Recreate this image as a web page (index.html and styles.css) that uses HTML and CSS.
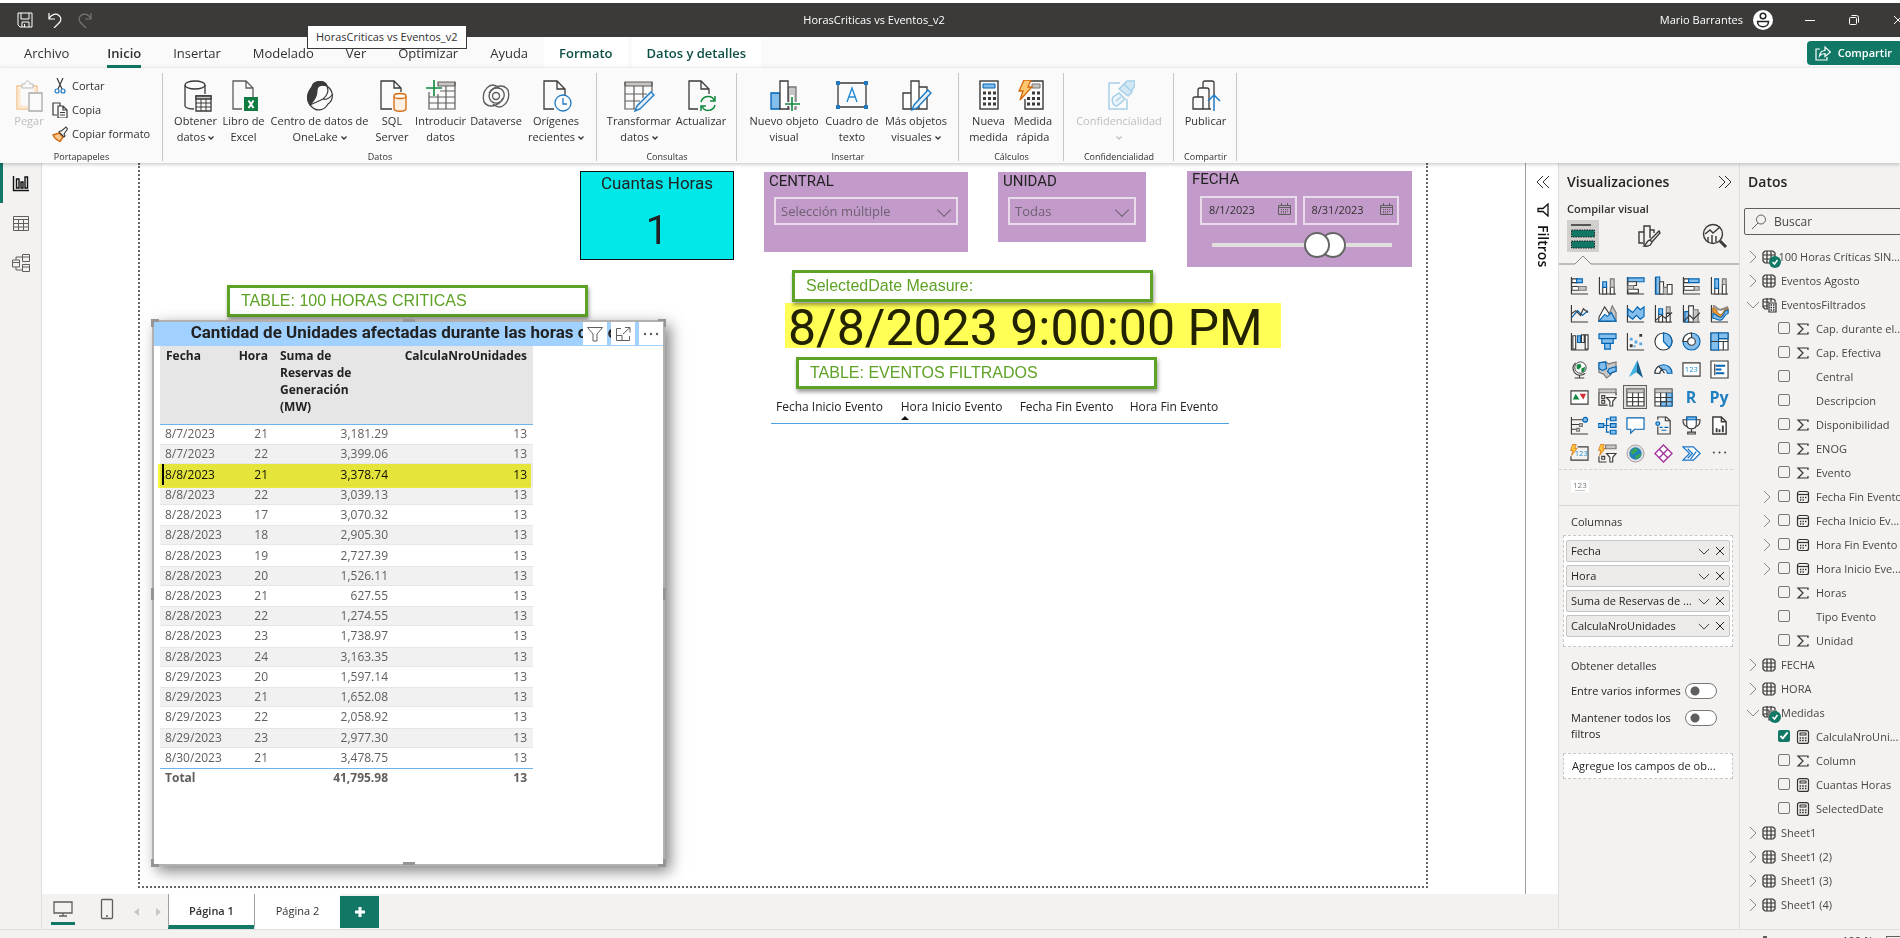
FILE: index.html
```html
<!DOCTYPE html>
<html lang="es">
<head>
<meta charset="utf-8">
<title>HorasCriticas vs Eventos_v2</title>
<link rel="stylesheet" href="styles.css">
</head>
<body>
<svg class="sprite" aria-hidden="true">
  <symbol id="i-right" viewBox="0 0 8 14"><path d="M1 1l6 6-6 6" fill="none" stroke="#8a8886"/></symbol>
  <symbol id="i-down" viewBox="0 0 14 8"><path d="M1 1l6 6 6-6" fill="none" stroke="currentColor"/></symbol>
  <symbol id="i-caret" viewBox="0 0 6 4"><path d="M.5 .5L3 3 5.500 .5" fill="none" stroke="currentColor" stroke-width="1.300"/></symbol>
  <symbol id="i-x" viewBox="0 0 10 10"><path d="M1 1l8 8M9 1l-8 8" fill="none" stroke="currentColor"/></symbol>
  <symbol id="i-table" viewBox="0 0 14 14"><path d="M3 1h8l2 2v8l-2 2H3l-2-2V3zM1 5h12M1 9h12M5 1v12M9 1v12" fill="none" stroke="#323130" stroke-width="1.200"/></symbol>
  <symbol id="i-tablecalc" viewBox="0 0 16 16"><path d="M6 12H3l-2-2V3l1-1h9l2 1v2M1 5h6M1 9h5M5 1v11M9 1v4" fill="none" stroke="#323130" stroke-width="1.200"/><path d="M7 6h7v9H7z" fill="#f3f2f1" stroke="#323130" stroke-width="1.200"/><path d="M8.500 8h4M8.500 10.500h4M8.500 13h4" stroke="#323130" stroke-width="1.500" stroke-dasharray="1.500 1"/></symbol>
  <symbol id="i-badge" viewBox="0 0 12 12"><circle cx="6" cy="6" r="6" fill="#117865"/><path d="M3.500 6l2 2 3-4" fill="none" stroke="#fff" stroke-width="1.500"/></symbol>
  <symbol id="i-sum" viewBox="0 0 14 14"><path d="M12 4V2H2l5 5-5 5h10v-2" fill="none" stroke="#323130" stroke-width="1.200"/></symbol>
  <symbol id="i-cal" viewBox="0 0 14 14"><rect x="1.500" y="1.500" width="11" height="11" rx="2" fill="none" stroke="#323130" stroke-width="1.200"/><path d="M1.500 4.500h11" stroke="#323130" stroke-width="1.200"/><path d="M4 7.500h7M4 10h5" stroke="#323130" stroke-width="1.300" stroke-dasharray="1.300 1.200"/></symbol>
  <symbol id="i-calc" viewBox="0 0 14 14"><rect x="1.500" y=".6" width="11" height="12.800" rx="2" fill="none" stroke="#323130" stroke-width="1.200"/><rect x="4" y="3" width="6" height="2" fill="none" stroke="#323130"/><path d="M3.500 8h7M3.500 10.500h7" stroke="#323130" stroke-width="1.600" stroke-dasharray="1.600 1.100"/></symbol>
  <symbol id="i-calendar" viewBox="0 0 13 13"><path d="M.5 2.500h12v9H.5zM.5 4.500h12M3.500 0v2.500M9.500 0v2.500" fill="none" stroke="#605e5c"/><path d="M3 6.500h8M3 8.500h8M3 10h6" stroke="#605e5c" stroke-dasharray="1 1"/></symbol>
  <symbol id="i-bolt" viewBox="0 0 12 20"><path d="M4 .8h6L7.500 7h4L2.500 18.500l2-8H.8z" fill="#ffc83d" stroke="#d4690b" stroke-width="1.200"/></symbol>
</svg>

<div class="app">
  <header class="titlebar">
    <div class="quick">
      <button aria-label="Guardar"><svg width="16" height="16" viewBox="0 0 16 16" fill="none" stroke="#fff"><path d="M1 1h14v14H3l-2-2zM4 1v6h8V1M5 15v-5h7v5M7.500 15v-3"/></svg></button>
      <button aria-label="Deshacer"><svg width="16" height="16" viewBox="0 0 16 16" fill="none" stroke="#fff" stroke-width="1.200"><path d="M2 1v6h6M2 6.500C5 2 9 1 12 3.500s2 5.500 0 7.500l-5 5"/></svg></button>
      <button aria-label="Rehacer"><svg width="16" height="16" viewBox="0 0 16 16" fill="none" stroke="#797775" stroke-width="1.200"><path d="M14 1v6H8M14 6.500C11 2 7 1 4 3.500s-2 5.500 0 7.500l5 5"/></svg></button>
    </div>
    <h1 class="doc">HorasCriticas vs Eventos_v2</h1>
    <div class="window">
      <span>Mario Barrantes</span>
      <svg class="avatar" width="20" height="20" viewBox="0 0 20 20"><circle cx="10" cy="10" r="10" fill="#fff"/><g fill="none" stroke="#222" stroke-width="1.500"><circle cx="10" cy="6" r="2.800"/><path d="M4.500 11.500h11c0 7-11 7-11 0z"/></g></svg>
      <button class="min" aria-label="Minimizar"><svg width="10" height="10" viewBox="0 0 10 10"><path d="M0 5.500h10" stroke="#fff"/></svg></button>
      <button class="max" aria-label="Restaurar"><svg width="10" height="10" viewBox="0 0 10 10" fill="none" stroke="#fff"><rect x=".5" y="2.500" width="7" height="7" rx="1"/><path d="M2.500 .5h5q2 0 2 2v5"/></svg></button>
      <button class="close" aria-label="Cerrar"><svg width="10" height="10"><use href="#i-x"/></svg></button>
    </div>
  </header>
  <div class="tip" role="tooltip">HorasCriticas vs Eventos_v2</div>

  <nav class="tabs">
    <button class="file">Archivo</button><button class="active">Inicio</button><button>Insertar</button><button>Modelado</button><button>Ver</button><button>Optimizar</button><button>Ayuda</button><button class="ctx">Formato</button><button class="ctx">Datos y detalles</button>
    <button class="share"><svg width="16" height="16" viewBox="0 0 16 16" fill="none" stroke="#fff" stroke-width="1.200"><path d="M5 4H1v11h11v-3M4.500 11C5 7 7 5.500 10 5.500V2l5.500 5L10 11.500V8.500C7.500 8.500 6 9 4.500 11z"/></svg>Compartir<svg width="10" height="6"><use href="#i-down"/></svg></button>
  </nav>

  <section class="ribbon">
    <div class="group clip">
      <div class="row">
        <button class="rb off"><svg width="28" height="32" viewBox="0 0 28 32" fill="none"><path d="M13 29H2V6h20v6" stroke="#f3c48d" stroke-width="1.500"/><path d="M4 8v19h9M20 8v4" stroke="#fbe8cf" stroke-width="3"/><path d="M7 8V4h3c0-4 5-4 5 0h3v4z" stroke="#bbb" fill="#fafafa"/><path d="M14 13h13v18H14z" fill="#fafafa" stroke="#aaa" stroke-width="1.300"/></svg>Pegar</button>
        <div class="mini">
          <button><svg width="16" height="16" viewBox="0 0 16 16" fill="none" stroke="#3b3a39" stroke-width="1.200"><path d="M5 0l5 11M11 0L6 11"/><g stroke="#1f7ac2"><circle cx="5" cy="13" r="2"/><circle cx="11" cy="13" r="2"/></g></svg>Cortar</button>
          <button><svg width="16" height="16" viewBox="0 0 16 16" fill="none" stroke="#3b3a39" stroke-width="1.200"><path d="M5 13H1V1h7v3"/><path d="M6 4h5l4 4v8H6zM11 4v4h4M8 10.500h5M8 13h5"/></svg>Copia</button>
          <button><svg width="16" height="16" viewBox="0 0 16 16" fill="none"><path d="M1 9l6-2 4 4-3 4.500C5 14 2 12 1 9z" fill="#f9c68c" stroke="#d4690b" stroke-width="1.400"/><path d="M7 6l5 5 1-1-1-2 3.500-5L14 1 9.500 5 8 5z" fill="#fff" stroke="#3b3a39" stroke-width="1.100"/></svg>Copiar formato</button>
        </div>
      </div>
      <div class="cap">Portapapeles</div>
    </div>

    <div class="group datos">
      <div class="row">
        <button class="rb"><svg width="32" height="32" viewBox="0 0 32 32" fill="none" stroke="#3b3a39" stroke-width="1.300"><ellipse cx="15" cy="5" rx="10" ry="4"/><path d="M5 5v21c1 2 4 3 9 3M25 5v9"/><path d="M16 16h15v15H16z" fill="#fafafa"/><path d="M16 16h15v3H16z" fill="#c8c6c4"/><path d="M16 23h15M16 27h15M21 19v12M26 19v12" stroke-width="1"/></svg><span>Obtener<br>datos <svg width="6" height="4"><use href="#i-caret"/></svg></span></button>
        <button class="rb"><svg width="32" height="32" viewBox="0 0 32 32" fill="none" stroke="#605e5c" stroke-width="1.300"><path d="M14 29H5V1h13l7 7v9M18 1v7h7"/><path d="M16 17h14v14H16z" fill="#107c41" stroke="none"/><path d="M20.500 20.500l5 7.500M25.500 20.500l-5 7.500" stroke="#fff" stroke-width="2"/></svg><span>Libro de<br>Excel</span></button>
        <button class="rb"><svg width="32" height="32" viewBox="0 0 32 32" fill="none" stroke="#3b3a39" stroke-width="1.200"><path d="M8 7C10 0 21 0 23 6c7 5 7 14 1 18-4 7-12 8-17 2-5-6-4-13 1-19z"/><path d="M8 7C10 0 21 0 23 6c-6-2-10 0-10 4 0 6-2 9-7 15-4-7-2-13 2-18z" fill="#3b3a39"/><path d="M23 6c2 5 1 9-4 13-4 2-9 4-13 6M29 14c-4 5-7 6-10 5"/></svg><span>Centro de datos de<br>OneLake <svg width="6" height="4"><use href="#i-caret"/></svg></span></button>
        <button class="rb"><svg width="32" height="32" viewBox="0 0 32 32" fill="none" stroke="#3b3a39" stroke-width="1.300"><path d="M16 29H5V1h13l7 7v4M18 1v7h7"/><path d="M18 16v13c1 3 11 3 12 0V16" fill="#fdf0e2" stroke="#d4690b"/><ellipse cx="24" cy="16" rx="6" ry="2.500" fill="#fff" stroke="#d4690b"/></svg><span>SQL<br>Server</span></button>
        <button class="rb"><svg width="32" height="32" viewBox="0 0 32 32" fill="none" stroke="#605e5c" stroke-width="1.200"><path d="M13 2h17v4H13z" fill="#c8c6c4"/><path d="M4 12v17h26V2M4 17h26M4 23h26M13 14v15M21 6v23M15 11h15"/><path d="M9 0v16M1 8h16" stroke="#10893e" stroke-width="1.600"/></svg><span>Introducir<br>datos</span></button>
        <button class="rb"><svg width="32" height="32" viewBox="0 0 32 32" fill="none" stroke="#605e5c" stroke-width="1.400"><path d="M19 8C10 0 1 11 4 22c5 7 14 4 19-3 3-5 0-11-6-11-7 0-10 8-6 13 4 4 10 2 12-3"/><path d="M13 24c9 8 18-3 15-14-5-7-14-4-19 3"/><circle cx="16" cy="16" r="3.500"/></svg><span>Dataverse</span></button>
        <button class="rb"><svg width="32" height="32" viewBox="0 0 32 32" fill="none" stroke="#3b3a39" stroke-width="1.300"><path d="M14 29H4V1h13l8 8v6M17 1v8h8"/><circle cx="23" cy="23" r="8" fill="#fff" stroke="#1f7ac2"/><path d="M23 18v6h4" stroke="#1f7ac2"/></svg><span>Orígenes<br>recientes <svg width="6" height="4"><use href="#i-caret"/></svg></span></button>
      </div>
      <div class="cap">Datos</div>
    </div>

    <div class="group consultas">
      <div class="row">
        <button class="rb"><svg width="32" height="32" viewBox="0 0 32 32" fill="none" stroke="#605e5c" stroke-width="1.200"><path d="M2 2h27v4H2z" fill="#c8c6c4"/><path d="M29 2v10M13 29H2V2M2 14h22M2 21h15M11 6v23M20 6v12"/><path d="M28 12l3 3-14 14-5 2 2-5z" fill="#e4f1fb" stroke="#1f7ac2" stroke-width="1.400"/></svg><span>Transformar<br>datos <svg width="6" height="4"><use href="#i-caret"/></svg></span></button>
        <button class="rb"><svg width="32" height="32" viewBox="0 0 32 32" fill="none" stroke="#3b3a39" stroke-width="1.300"><path d="M13 29H4V1h12l8 8v5M16 1v8h8"/><path d="M16 22c2-7 11-7 13-2M30 16v5h-5M30 25c-2 7-11 7-13 1M16 31v-5h5" stroke="#10893e" stroke-width="1.500"/></svg><span>Actualizar</span></button>
      </div>
      <div class="cap">Consultas</div>
    </div>

    <div class="group insertar">
      <div class="row">
        <button class="rb"><svg width="32" height="32" viewBox="0 0 32 32" fill="none" stroke-width="1.300"><path d="M20 7h8v22h-8z" fill="#c8c6c4" stroke="#797775"/><path d="M3 13h9v16H3z" fill="#83beec" stroke="#0063b1"/><path d="M12 1h8v28h-8z" fill="#fff" stroke="#3b3a39"/><path d="M24 15v17M16 24h16" stroke="#fafafa" stroke-width="4"/><path d="M24 17v14M17 24h15" stroke="#10893e" stroke-width="1.600"/></svg><span>Nuevo objeto<br>visual</span></button>
        <button class="rb"><svg width="32" height="32" viewBox="0 0 32 32" fill="none"><path d="M2 3h28v24H2z" stroke="#3b3a39" stroke-width="1.300"/><path d="M0 1h4v4H0zM28 1h4v4h-4zM0 25h4v4H0zM28 25h4v4h-4z" fill="#1f7ac2"/><path d="M11 22l5-14 5 14M13 17h6" stroke="#1f8ad2" stroke-width="1.400"/></svg><span>Cuadro de<br>texto</span></button>
        <button class="rb"><svg width="32" height="32" viewBox="0 0 32 32" fill="none" stroke="#3b3a39" stroke-width="1.300"><path d="M3 13h8v16H3zM11 1h8v28h-8zM19 7h8v22h-8z" fill="#fff"/><path d="M28 10l3 3-14 15-5 2 2-5z" fill="#e4f1fb" stroke="#1f7ac2" stroke-width="1.400"/></svg><span>Más objetos<br>visuales <svg width="6" height="4"><use href="#i-caret"/></svg></span></button>
      </div>
      <div class="cap">Insertar</div>
    </div>

    <div class="group calculos">
      <div class="row">
        <button class="rb"><svg width="32" height="32" viewBox="0 0 32 32" fill="none" stroke="#3b3a39"><rect x="7" y="1" width="18" height="28" stroke-width="1.400"/><path d="M10 4h12v4H10z" fill="#83beec" stroke="#0063b1"/><path d="M10 13h13M10 18.500h13M10 24h13" stroke-width="3" stroke-dasharray="3 2"/></svg><span>Nueva<br>medida</span></button>
        <button class="rb"><svg width="32" height="32" viewBox="0 0 32 32" fill="none" stroke="#3b3a39"><path d="M12 1h14v28H8V19" stroke-width="1.400"/><path d="M15 4h8v4h-8z" fill="#c8c6c4" stroke="#797775"/><path d="M15 13h9M10 18.500h14M10 24h14" stroke-width="3" stroke-dasharray="3 2"/><path d="M7 0h7l-3 7h4L3 20l3-9H2z" fill="#ffc870" stroke="#d4690b" stroke-width="1.300"/></svg><span>Medida<br>rápida</span></button>
      </div>
      <div class="cap">Cálculos</div>
    </div>

    <div class="group confid">
      <div class="row">
        <button class="rb off"><svg width="32" height="32" viewBox="0 0 32 32" fill="none" stroke="#a6cfe8" stroke-width="1.500"><path d="M17 3H6v26h18V19"/><path d="M10 17l6-4 6 6-8 7c-4 0-6-5-4-9zM13 21l5-4" fill="#e8f3fa"/><path d="M16 9l5-5 8 8-4 4zM21 4l3-3 8 0-1 6-3 5" fill="#d3e8f5"/></svg><span>Confidencialidad<br><svg width="6" height="4"><use href="#i-caret"/></svg></span></button>
      </div>
      <div class="cap">Confidencialidad</div>
    </div>

    <div class="group compartir">
      <div class="row">
        <button class="rb"><svg width="32" height="32" viewBox="0 0 32 32" fill="none" stroke="#3b3a39" stroke-width="1.300"><path d="M3 29V19q0-2 2-2h8v12zM8 17V10q0-2 2-2h7q2 0 2 2v19h-6M13 8V3q0-2 2-2h7q2 0 2 2v12M19 29h2"/><path d="M24 31V15M18 21l6-6 6 6" stroke="#1f7ac2" stroke-width="1.500"/></svg><span>Publicar</span></button>
      </div>
      <div class="cap">Compartir</div>
    </div>
  </section>

  <main class="work">
    <nav class="rail">
      <button class="on" aria-label="Informe"><svg width="18" height="18" viewBox="0 0 18 18" fill="none" stroke="#111" stroke-width="1.400"><path d="M1.500 2v14.500H17M4.500 5h2.500v9H4.500zM9 8h2v6H9zM13 3h2.500v11H13z"/></svg></button>
      <button aria-label="Datos"><svg width="18" height="18" viewBox="0 0 18 18" fill="none" stroke="#605e5c"><path d="M1.500 2.500h15v14h-15zM1.500 5.500h15M1.500 9.500h15M1.500 13h15M6.500 5.500v11M11.500 5.500v11"/></svg></button>
      <button aria-label="Modelo"><svg width="18" height="18" viewBox="0 0 18 18" fill="none" stroke="#605e5c"><path d="M10.500 .5h7v7h-7zM10.500 3h7M10.500 10.500h7v7h-7zM10.500 13h7M.5 6h7v7h-7zM.5 8.500h7M4 6V3h6.500M4 13v3h6.500"/></svg></button>
    </nav>

    <div class="center">
      <div class="stage">
        <div class="canvas">
          <div class="page"></div>

          <article class="card"><h2>Cuantas Horas</h2><p>1</p></article>

          <section class="slicer central"><label for="central">CENTRAL</label><select id="central"><option>Selección múltiple</option></select></section>
          <section class="slicer unidad"><label for="unidad">UNIDAD</label><select id="unidad"><option>Todas</option></select></section>
          <section class="slicer fecha"><span class="name">FECHA</span>
            <div class="dates">
              <label><input type="text" value="8/1/2023" aria-label="Fecha inicial"><svg width="13" height="13"><use href="#i-calendar"/></svg></label>
              <label><input type="text" value="8/31/2023" aria-label="Fecha final"><svg width="13" height="13"><use href="#i-calendar"/></svg></label>
            </div>
            <div class="range"><input type="range" value="70" aria-label="Hasta"><input type="range" value="60" aria-label="Desde"></div>
          </section>

          <div class="measure">8/8/2023 9:00:00 PM</div>
          <div class="note n1">TABLE: 100 HORAS CRITICAS</div>
          <div class="note n2">SelectedDate Measure:</div>
          <div class="note n3">TABLE: EVENTOS FILTRADOS</div>

          <table class="events"><thead><tr><th>Fecha Inicio Evento</th><th class="asc">Hora Inicio Evento</th><th>Fecha Fin Evento</th><th>Hora Fin Evento</th></tr></thead></table>

          <article class="visual">
            <h2>Cantidad de Unidades afectadas durante las horas críticas</h2>
            <div class="tools">
              <button aria-label="Filtros"><svg width="16" height="16" viewBox="0 0 16 16" fill="none" stroke="#605e5c"><path d="M.5 1.500h15L10 8v7H6V8z"/></svg></button>
              <button aria-label="Modo de enfoque"><svg width="16" height="16" viewBox="0 0 16 16" fill="none" stroke="#605e5c"><path d="M6 2.500H1.500v12h13V10M10 1.500h5v5M15 1.500L8 8M1.500 9.500H7v5"/></svg></button>
              <button aria-label="Más opciones"><svg width="16" height="16" viewBox="0 0 16 16" fill="#605e5c"><circle cx="2" cy="8" r="1.200"/><circle cx="8" cy="8" r="1.200"/><circle cx="14" cy="8" r="1.200"/></svg></button>
            </div>
            <table class="grid">
              <colgroup><col class="c1"><col class="c2"><col class="c3"><col class="c4"></colgroup>
              <thead><tr><th>Fecha</th><th>Hora</th><th>Suma de Reservas de Generación (MW)</th><th>CalculaNroUnidades</th></tr></thead>
              <tbody>
                <tr><td>8/7/2023</td><td>21</td><td>3,181.29</td><td>13</td></tr>
                <tr><td>8/7/2023</td><td>22</td><td>3,399.06</td><td>13</td></tr>
                <tr class="sel"><td>8/8/2023</td><td>21</td><td>3,378.74</td><td>13</td></tr>
                <tr><td>8/8/2023</td><td>22</td><td>3,039.13</td><td>13</td></tr>
                <tr><td>8/28/2023</td><td>17</td><td>3,070.32</td><td>13</td></tr>
                <tr><td>8/28/2023</td><td>18</td><td>2,905.30</td><td>13</td></tr>
                <tr><td>8/28/2023</td><td>19</td><td>2,727.39</td><td>13</td></tr>
                <tr><td>8/28/2023</td><td>20</td><td>1,526.11</td><td>13</td></tr>
                <tr><td>8/28/2023</td><td>21</td><td>627.55</td><td>13</td></tr>
                <tr><td>8/28/2023</td><td>22</td><td>1,274.55</td><td>13</td></tr>
                <tr><td>8/28/2023</td><td>23</td><td>1,738.97</td><td>13</td></tr>
                <tr><td>8/28/2023</td><td>24</td><td>3,163.35</td><td>13</td></tr>
                <tr><td>8/29/2023</td><td>20</td><td>1,597.14</td><td>13</td></tr>
                <tr><td>8/29/2023</td><td>21</td><td>1,652.08</td><td>13</td></tr>
                <tr><td>8/29/2023</td><td>22</td><td>2,058.92</td><td>13</td></tr>
                <tr><td>8/29/2023</td><td>23</td><td>2,977.30</td><td>13</td></tr>
                <tr><td>8/30/2023</td><td>21</td><td>3,478.75</td><td>13</td></tr>
              </tbody>
              <tfoot><tr><td>Total</td><td></td><td>41,795.98</td><td>13</td></tr></tfoot>
            </table>
            <div class="marker"></div>
            <i class="h tl"></i><i class="h tr"></i><i class="h bl"></i><i class="h br"></i><i class="h tm"></i><i class="h bm"></i><i class="h lm"></i><i class="h rm"></i>
          </article>
        </div>

        <aside class="filtros">
          <svg width="14" height="14" viewBox="0 0 14 14" fill="none" stroke="#323130"><path d="M7 1L1 7l6 6M13 1L7 7l6 6"/></svg>
          <svg width="12" height="14" viewBox="0 0 12 14" fill="none" stroke="#111" stroke-width="1.300"><path d="M11 1v12L6 8.500H1v-3h5z"/></svg>
          <h2>Filtros</h2>
        </aside>
      </div>

      <footer class="pagebar">
        <button class="dev on" aria-label="Escritorio"><svg width="20" height="20" viewBox="0 0 20 20" fill="none" stroke="#605e5c" stroke-width="1.300"><path d="M1 3h18v11H1zM10 14v3M6 17h8"/></svg></button>
        <button class="dev phone" aria-label="Móvil"><svg width="14" height="22" viewBox="0 0 14 22" fill="none" stroke="#605e5c" stroke-width="1.300"><rect x="1.500" y="1.500" width="11" height="19" rx="1"/><path d="M6 18h2"/></svg></button>
        <button class="arr" aria-label="Anterior"><svg width="5" height="8"><path d="M5 0v8L0 4z" fill="#c8c6c4"/></svg></button>
        <button class="arr" aria-label="Siguiente"><svg width="5" height="8"><path d="M0 0v8l5-4z" fill="#c8c6c4"/></svg></button>
        <button class="pg on">Página 1</button><button class="pg">Página 2</button>
        <button class="add" aria-label="Nueva página"><svg width="12" height="12"><path d="M6 1v10M1 6h10" stroke="#fff" stroke-width="3"/></svg></button>
      </footer>
    </div>

    <aside class="vis">
      <header><h2>Visualizaciones</h2><svg width="14" height="14" viewBox="0 0 14 14" fill="none" stroke="#323130"><path d="M1 1l6 6-6 6M7 1l6 6-6 6"/></svg></header>
      <h3>Compilar visual</h3>
      <div class="modes">
        <button class="on" aria-label="Compilar visual"><svg width="26" height="26" viewBox="0 0 26 26"><path d="M1 2h20" stroke="#222" stroke-width="1.400"/><g fill="#117865" stroke="#222" stroke-dasharray="1.500 1"><path d="M1.500 7h23v7h-23zM1.500 18h23v7h-23z"/></g></svg></button>
        <button aria-label="Dar formato"><svg width="24" height="26" viewBox="0 0 24 26" fill="none" stroke="#3b3a39" stroke-width="1.400"><path d="M6 20H2V9h5v13M7 9V3h6v12M13 7h4v3"/><path d="M22 8L13 17l2 2 8-9zM13 17c-3 0-3 4-6 6 4 1 7-1 8-4" fill="#f3f2f1"/></svg></button>
        <button aria-label="Análisis"><svg width="26" height="26" viewBox="0 0 26 26" fill="none" stroke="#3b3a39" stroke-width="1.400"><circle cx="11" cy="11" r="9.500"/><path d="M3 11l5-4 3 3 7-6M6 19v-5M10 20v-8M14 19v-6"/><path d="M18 18l6 6" stroke-width="3"/></svg></button>
      </div>
      <svg class="notch" width="181" height="10" viewBox="0 0 181 10" fill="none" stroke="#8a8886"><path d="M0 9h16l8-8 8 8h149"/></svg>

      <div class="gallery">
        <svg viewBox="0 0 20 20"><path d="M1.500 1v18H19" class="k"/><path d="M2 3h6v4H2z" class="w"/><path d="M7 3h6v4H7z" class="b"/><path d="M2 11h7v4H2z" class="w"/><path d="M9 11h8v4H9z" class="g"/></svg>
        <svg viewBox="0 0 20 20"><path d="M1.500 1v18H19" class="k"/><path d="M5 12h4v7H5zM13 12h4v7h-4z" class="w"/><path d="M5 6h4v6H5z" class="b"/><path d="M13 3h4v9h-4z" class="g"/></svg>
        <svg viewBox="0 0 20 20"><path d="M1.500 1v18H19" class="k"/><path d="M2 2h17v4H2z" class="b"/><path d="M2 6h9v4H2zM2 14h11v4H2z" class="w"/><path d="M2 10h6v4H2z" class="g"/></svg>
        <svg viewBox="0 0 20 20"><path d="M1.500 1v18H19" class="k"/><path d="M2 1h4v18H2z" class="b"/><path d="M6 6h4v13H6zM14 9h5v10h-5z" class="w"/><path d="M10 12h4v7h-4z" class="g"/></svg>
        <svg viewBox="0 0 20 20"><path d="M1.500 1v18H19" class="k"/><path d="M2 3h5v4H2zM2 11h11v4H2z" class="w"/><path d="M7 3h11v4H7z" class="b"/><path d="M13 11h5v4h-5z" class="g"/></svg>
        <svg viewBox="0 0 20 20"><path d="M1.500 1v18H19" class="k"/><path d="M5 13h4v6H5zM13 9h4v10h-4z" class="w"/><path d="M5 3h4v10H5z" class="b"/><path d="M13 3h4v6h-4z" class="g"/></svg>

        <svg viewBox="0 0 20 20"><path d="M1.500 1v18H19" class="k"/><path d="M2 14L8 7l5 5 6-5" class="bl"/><path d="M2 10l4-3 5 5 3-7 5 4" class="k"/></svg>
        <svg viewBox="0 0 20 20"><path d="M9 18l6-16 4 7v9z" class="g"/><path d="M1 14L7 3l6 9v6H1z" class="w"/><path d="M1 18l6-7 3 2 4-4 5 9z" class="b"/></svg>
        <svg viewBox="0 0 20 20"><path d="M1.500 1v18H19" class="k"/><path d="M2 5l5 4 5-6 3 3 4-3v10l-4 3-4-4-4 4-5-4z" class="b"/></svg>
        <svg viewBox="0 0 20 20"><path d="M1.500 1v18H19" class="k"/><path d="M5 10h4v9H5zM13 10h4v9h-4z" class="w"/><path d="M5 5h4v6H5z" class="b"/><path d="M13 3h4v6h-4z" class="g"/><path d="M2 17l6-5 4 3 7-6" class="k"/></svg>
        <svg viewBox="0 0 20 20"><path d="M1.500 1v18H19" class="k"/><path d="M3 8h4v11H3z" class="b"/><path d="M7 2h5v17H7z" class="w"/><path d="M12 6h5v13h-5z" class="g"/><path d="M2 18l6-6 4 4 7-7" class="k"/></svg>
        <svg viewBox="0 0 20 20"><path d="M1.500 1v18H19" class="k"/><path d="M3 4c5 0 4 7 8 7s3-7 8-7v5c-4 0-4 7-8 7S7 9 3 9z" fill="#ef9d37" stroke="#a05a10"/><path d="M3 10c4 0 4 4 8 4s3-8 8-8v4c-4 0-4 7-8 7s-4-2-8-2z" class="b"/><path d="M3 2c4 0 4 4 8 4s4-2 8-3" fill="none" stroke="#8a8886" stroke-width="2"/></svg>

        <svg viewBox="0 0 20 20"><path d="M1.500 1v18H19" class="k"/><path d="M3 4h3v14H3zM12 3h3v8h-3zM16 3h3v15h-3z" class="w"/><path d="M8 4h3v7H8z" class="b"/></svg>
        <svg viewBox="0 0 20 20"><path d="M1 2h18v5H1zM4 7h12v5H4zM7 12h6v6H7z" class="b"/></svg>
        <svg viewBox="0 0 20 20"><path d="M1.500 1v18H19" class="k"/><path d="M4 6h3v3H4zM9 9h3v3H9zM14 11h3v3h-3zM8 14h2v2H8z" fill="#5ba7e0"/><path d="M14 2h3v3h-3zM4 13h3v3H4z" fill="#3b3a39"/></svg>
        <svg viewBox="0 0 20 20"><circle cx="10" cy="10" r="9" class="w"/><path d="M10 1a9 9 0 0 1 6 15.500L10 10z" class="b"/></svg>
        <svg viewBox="0 0 20 20"><circle cx="10" cy="10" r="9" class="b"/><path d="M10 1a9 9 0 0 0-9 9h5a4 4 0 0 1 4-4z" class="w"/><circle cx="10" cy="10" r="4" class="w"/></svg>
        <svg viewBox="0 0 20 20"><path d="M1 1h18v18H1z" class="w"/><path d="M1 1h8v18H1z" class="b"/><path d="M1 10h18M14 10v9M9 7h10" class="k"/><path d="M9 1h10v6H9z" class="b"/></svg>

        <svg viewBox="0 0 20 20"><circle cx="11" cy="8" r="6" fill="#fff" stroke="#3b3a39"/><path d="M7 5l4-1 1 3-3 3-2-1zM12 9l4-2-1 5-3 1z" fill="#10893e"/><path d="M6 3c-5 4-3 12 4 13 3 0 5-1 6-2M10 16v3M5 19h10" class="k"/></svg>
        <svg viewBox="0 0 20 20"><path d="M1 3l7-1 3 2 8-2v10l-4 1-2 3-4 3-3-4-5-2z" class="g"/><path d="M1 3l7-1 1 7-4 2-4-2zM12 9l7-2v5l-4 1-2 2-3-3z" class="b"/></svg>
        <svg viewBox="0 0 20 20"><path d="M12 0L3 18l8-5z" fill="#41b3e6"/><path d="M12 0l6 19-7-6z" fill="#155f8d"/></svg>
        <svg viewBox="0 0 20 20"><path d="M1 14a9 9 0 0 1 18 0h-5a4 4 0 0 0-8 0z" class="b"/><path d="M1 14a9 9 0 0 1 4-7.500l3 4A4 4 0 0 0 6 14z" class="w"/><path d="M11 14L7 8" class="k"/></svg>
        <svg viewBox="0 0 20 20"><path d="M1 3h18v14H1z" class="w"/><text x="3" y="13" class="num">123</text></svg>
        <svg viewBox="0 0 20 20"><path d="M1 1h18v18H1zM5 4v12" class="w"/><path d="M6 6h10M6 10h6M6 14h9" stroke="#0063b1" stroke-width="2"/></svg>

        <svg viewBox="0 0 20 20"><path d="M1 3h18v14H1z" class="w"/><path d="M3 12l3-6 4 6z" fill="#10893e"/><path d="M10 6h7l-3 6z" fill="#d13438"/></svg>
        <svg viewBox="0 0 20 20"><path d="M1 1h18v4H1z" class="g"/><path d="M10 18H1V5M19 5v3M4 8h3v3H4zM4 13h3v3H4z" class="k"/><path d="M9 10h10l-3.500 4v5h-3v-5z" class="w"/></svg>
        <span class="pick"><svg viewBox="0 0 20 20"><path d="M1 1h18v18H1z" class="w"/><path d="M1 1h18v4H1z" class="g"/><path d="M1 10h18M1 14.500h18M7 5v14M13 5v14" class="k"/></svg></span>
        <svg viewBox="0 0 20 20"><path d="M1 1h18v18H1z" class="w"/><path d="M13 5h6v14H7v-4.500h6z" class="b"/><path d="M1 1h18v4H1z" class="g"/><path d="M1 10h18M1 14.500h18M7 5v14M13 5v14" class="k"/></svg>
        <b class="lang">R</b>
        <b class="lang">Py</b>

        <svg viewBox="0 0 20 20"><path d="M1.500 1v18H19M2 4h12M2 9h10M2 14h5" class="k"/><circle cx="16" cy="4" r="2.500" class="b"/><path d="M10 8h3v3h-3zM7 13h3v3H7z" class="g"/></svg>
        <svg viewBox="0 0 20 20"><path d="M6 10h6M12 3H9v14h3" class="bl"/><path d="M0 8h6v4H0zM13 1h6v4h-6zM13 8h6v4h-6zM13 15h6v4h-6z" class="b"/></svg>
        <svg viewBox="0 0 20 20"><path d="M1 2h18v12H9l-4 4v-4H1z" fill="#fff" stroke="#0063b1" stroke-width="1.200"/></svg>
        <svg viewBox="0 0 20 20"><path d="M4 4V1h9l4 4v14H4v-8M12 1v4h5" class="k"/><path d="M6 12h3M11 12h4M8 15h5" class="bl"/><circle cx="4" cy="8" r="2" class="b"/></svg>
        <svg viewBox="0 0 20 20"><path d="M5 4H1c0 5 2 7 5 7M15 4h4c0 5-2 7-5 7M10 13v4M6 19h8v-2H6z" class="k"/><path d="M5 1h10v8c0 6-10 6-10 0z" class="w"/><path d="M5 1h10v3H5z" class="b"/></svg>
        <svg viewBox="0 0 20 20"><path d="M3 1h9l5 5v13H3zM12 1v5h5" fill="#fff" stroke="#3b3a39" stroke-width="1.500"/><path d="M7 17v-4M10 17v-3M13.500 17v-7" stroke="#3b3a39" stroke-width="2"/></svg>

        <svg viewBox="0 0 20 20"><path d="M8 3h11v14H1v-4" class="k"/><text x="5" y="13" class="num">123</text><use href="#i-bolt" width="8" height="13" x="0" y="0"/></svg>
        <svg viewBox="0 0 20 20"><path d="M8 1h11v4H8z" class="g"/><path d="M1 13v6h8M4 13h3v3H4z" class="k"/><path d="M9 10h10l-3.500 4v5h-3v-5z" class="w"/><use href="#i-bolt" width="8" height="13" x="0" y="0"/></svg>
        <svg viewBox="0 0 20 20"><circle cx="10" cy="10" r="9" fill="#e1dfdd" stroke="#a19f9d"/><circle cx="10" cy="10" r="6.500" fill="#2080c0"/><path d="M5 8l5-4 3 2-4 4-3 1zM9 13l6-3 1 2-5 4z" fill="#3aa655"/></svg>
        <svg viewBox="0 0 20 20"><path d="M10 1l9 9-9 9-9-9zM5.500 5.500l9 9M14.500 5.500l-9 9" fill="#fff" stroke="#a0309a" stroke-width="1.400"/></svg>
        <svg viewBox="0 0 20 20"><path d="M1 3h11l7 7-7 7H1l7-7zM6 5l5 5-5 5M9 16l6-8" fill="#fff" stroke="#1a73c8" stroke-width="1.300"/></svg>
        <svg viewBox="0 0 20 20"><g fill="#3b3a39"><circle cx="4" cy="9" r="1"/><circle cx="10" cy="9" r="1"/><circle cx="16" cy="9" r="1"/></g></svg>
      </div>

      <div class="custom"><svg width="18" height="12" viewBox="0 0 18 12"><path d="M0 0h18v12H0z" fill="#fff"/><text x="2" y="8" class="num dim">123</text><path d="M4 10.500h10" stroke="#c8c6c4"/></svg></div>

      <div class="fields">
        <h4>Columnas</h4>
        <ul class="well">
          <li><span>Fecha</span><svg width="12" height="7"><use href="#i-down"/></svg><svg width="10" height="10"><use href="#i-x"/></svg></li>
          <li><span>Hora</span><svg width="12" height="7"><use href="#i-down"/></svg><svg width="10" height="10"><use href="#i-x"/></svg></li>
          <li><span>Suma de Reservas de ...</span><svg width="12" height="7"><use href="#i-down"/></svg><svg width="10" height="10"><use href="#i-x"/></svg></li>
          <li><span>CalculaNroUnidades</span><svg width="12" height="7"><use href="#i-down"/></svg><svg width="10" height="10"><use href="#i-x"/></svg></li>
        </ul>
        <h4 class="drill">Obtener detalles</h4>
        <label class="sw"><span>Entre varios informes</span><input type="checkbox"></label>
        <label class="sw"><span>Mantener todos los filtros</span><input type="checkbox"></label>
        <div class="drop">Agregue los campos de ob...</div>
      </div>
    </aside>

    <aside class="data">
      <h2>Datos</h2>
      <div class="search"><svg width="16" height="16" viewBox="0 0 16 16" fill="none" stroke="#605e5c"><circle cx="10" cy="5.500" r="4.500"/><path d="M7 9l-6 6"/></svg><input type="text" placeholder="Buscar" aria-label="Buscar"></div>
      <ul class="tree">
        <li class="t"><svg class="r"><use href="#i-right"/></svg><span class="ic"><svg><use href="#i-table"/></svg><svg class="badge"><use href="#i-badge"/></svg></span>100 Horas Críticas SIN...</li>
        <li class="t"><svg class="r"><use href="#i-right"/></svg><span class="ic"><svg><use href="#i-table"/></svg></span>Eventos Agosto</li>
        <li class="t"><svg class="d"><use href="#i-down"/></svg><span class="ic"><svg class="big"><use href="#i-tablecalc"/></svg></span>EventosFiltrados</li>
        <li class="f"><label><input type="checkbox"><svg><use href="#i-sum"/></svg>Cap. durante el...</label></li>
        <li class="f"><label><input type="checkbox"><svg><use href="#i-sum"/></svg>Cap. Efectiva</label></li>
        <li class="f"><label><input type="checkbox"><svg></svg>Central</label></li>
        <li class="f"><label><input type="checkbox"><svg></svg>Descripcion</label></li>
        <li class="f"><label><input type="checkbox"><svg><use href="#i-sum"/></svg>Disponibilidad</label></li>
        <li class="f"><label><input type="checkbox"><svg><use href="#i-sum"/></svg>ENOG</label></li>
        <li class="f"><label><input type="checkbox"><svg><use href="#i-sum"/></svg>Evento</label></li>
        <li class="f x"><svg class="r"><use href="#i-right"/></svg><label><input type="checkbox"><svg><use href="#i-cal"/></svg>Fecha Fin Evento</label></li>
        <li class="f x"><svg class="r"><use href="#i-right"/></svg><label><input type="checkbox"><svg><use href="#i-cal"/></svg>Fecha Inicio Ev...</label></li>
        <li class="f x"><svg class="r"><use href="#i-right"/></svg><label><input type="checkbox"><svg><use href="#i-cal"/></svg>Hora Fin Evento</label></li>
        <li class="f x"><svg class="r"><use href="#i-right"/></svg><label><input type="checkbox"><svg><use href="#i-cal"/></svg>Hora Inicio Eve...</label></li>
        <li class="f"><label><input type="checkbox"><svg><use href="#i-sum"/></svg>Horas</label></li>
        <li class="f"><label><input type="checkbox"><svg></svg>Tipo Evento</label></li>
        <li class="f"><label><input type="checkbox"><svg><use href="#i-sum"/></svg>Unidad</label></li>
        <li class="t"><svg class="r"><use href="#i-right"/></svg><span class="ic"><svg><use href="#i-table"/></svg></span>FECHA</li>
        <li class="t"><svg class="r"><use href="#i-right"/></svg><span class="ic"><svg><use href="#i-table"/></svg></span>HORA</li>
        <li class="t"><svg class="d"><use href="#i-down"/></svg><span class="ic"><svg class="big"><use href="#i-tablecalc"/></svg><svg class="badge"><use href="#i-badge"/></svg></span>Medidas</li>
        <li class="f"><label><input type="checkbox" checked><svg><use href="#i-calc"/></svg>CalculaNroUni...</label></li>
        <li class="f"><label><input type="checkbox"><svg><use href="#i-sum"/></svg>Column</label></li>
        <li class="f"><label><input type="checkbox"><svg><use href="#i-calc"/></svg>Cuantas Horas</label></li>
        <li class="f"><label><input type="checkbox"><svg><use href="#i-calc"/></svg>SelectedDate</label></li>
        <li class="t"><svg class="r"><use href="#i-right"/></svg><span class="ic"><svg><use href="#i-table"/></svg></span>Sheet1</li>
        <li class="t"><svg class="r"><use href="#i-right"/></svg><span class="ic"><svg><use href="#i-table"/></svg></span>Sheet1 (2)</li>
        <li class="t"><svg class="r"><use href="#i-right"/></svg><span class="ic"><svg><use href="#i-table"/></svg></span>Sheet1 (3)</li>
        <li class="t"><svg class="r"><use href="#i-right"/></svg><span class="ic"><svg><use href="#i-table"/></svg></span>Sheet1 (4)</li>
      </ul>
    </aside>
  </main>
  <footer class="status"><i class="thumb"></i><span>100 %</span><i class="fit"></i></footer>
</div>
</body>
</html>
```
FILE: styles.css
```css
* { box-sizing: border-box; }
body, h1, h2, h3, h4, p, ul { margin: 0; padding: 0; }
ul { list-style: none; }
body { font: 12px/16px "Open Sans", "Noto Sans", sans-serif; color: #323130; background: #fff; overflow: hidden; }
button { font: inherit; color: inherit; background: none; border: 0; padding: 0; white-space: nowrap; }
svg { flex: none; display: block; }
.sprite { position: absolute; width: 0; height: 0; }

.app { position: relative; height: 100vh; padding-top: 3px; display: flex; flex-direction: column; overflow: hidden; }

/* Title bar */
.titlebar { height: 34px; flex: none; background: #3b3a39; color: #fff; display: grid; grid-template-columns: 1fr auto 1fr; align-items: center; }
.quick { display: flex; gap: 14px; padding-left: 17px; }
.doc { font-size: 11px; font-weight: 400; position: relative; right: 76px; }
.window { display: flex; align-items: center; justify-self: end; font-size: 11px; margin-right: -3px; }
.avatar { margin-left: 10px; }
.min { margin-left: 32px; }
.max, .close { margin-left: 34px; }
.tip { position: absolute; left: 307px; top: 25px; z-index: 9; height: 24px; padding: 0 9px 0 8px; border: 1px solid #3b3a39; background: #fff; font-size: 11px; line-height: 22px; }

/* Ribbon tabs */
.tabs { height: 31px; flex: none; display: flex; background: #fafafa; padding-left: 8px; font-size: 13px; }
.tabs button { position: relative; padding: 0 16px; }
.tabs .file { margin-right: 6px; }
.tabs .active { font-weight: 600; }
.tabs .active::after { content: ""; position: absolute; left: 16px; right: 16px; bottom: 0; height: 3px; background: #117865; }
.tabs .ctx { background: #fff; font-weight: 600; color: #0e4f45; margin-right: 4px; padding: 0 15px; }
.tabs .share { margin: 4px -17px 3px auto; height: 24px; padding: 0 8px; display: flex; align-items: center; gap: 7px; border-radius: 4px; background: #117865; color: #fff; font-size: 11px; font-weight: 600; }

/* Ribbon */
.ribbon { height: 95px; flex: none; display: flex; background: #fafafa; box-shadow: 0 1px 4px rgba(0,0,0,.25); position: relative; z-index: 2; font-size: 11px; }
.group { position: relative; display: flex; flex-direction: column; padding: 12px 8px 0; }
.group::after { content: ""; position: absolute; right: 0; top: 5px; bottom: 2px; width: 1px; background: #c8c6c4; }
.row { display: grid; height: 71px; justify-content: center; }
.cap { text-align: center; font-size: 9px; line-height: 12px; }
.rb { display: flex; flex-direction: column; align-items: center; gap: 1px; line-height: 16px; text-align: center; }
.rb span svg { display: inline-block; vertical-align: middle; }
.off { color: #c0bebc; }
.clip { width: 163px; }
.clip .row { grid-template-columns: 42px 102px; justify-content: start; }
.mini { display: flex; flex-direction: column; gap: 8px; padding-left: 2px; margin-top: -2px; }
.mini button { display: flex; align-items: center; gap: 4px; }
.datos { padding-left: 9px; padding-right: 9px; }
.datos .row { grid-template-columns: 47px 49px 103px 42px 55px 56px 64px; }
.consultas .row { grid-template-columns: 68px 56px; }
.insertar .row { grid-template-columns: 78px 58px 70px; }
.calculos .row { grid-template-columns: 43px 46px; }
.confid .row { grid-template-columns: 94px; }
.compartir .row { grid-template-columns: 47px; }

/* Work area */
.work { flex: 1; min-height: 0; display: flex; }
.rail { width: 42px; flex: none; background: #f3f2f1; border-right: 1px solid #e1dfdd; display: flex; flex-direction: column; }
.rail button { height: 40px; padding-left: 9px; border-left: 3px solid transparent; }
.rail .on { border-color: #117865; }
.center { flex: 1; min-width: 0; display: flex; flex-direction: column; }
.stage { flex: 1; min-height: 0; display: flex; }
.canvas { flex: 1; position: relative; overflow: hidden; background: #fff; }

/* Report canvas: visuals sit where the author placed them */
.page { position: absolute; left: 96px; top: 0; width: 1290px; height: 725px; border: 2px dotted #666; border-top: 0; }
.card { position: absolute; left: 538px; top: 8px; width: 154px; height: 89px; background: #00e8e8; border: 1px solid #111; text-align: center; font-family: Roboto, sans-serif; color: #222; }
.card h2 { font-size: 17px; line-height: 22px; font-weight: 400; }
.card p { font-size: 40px; line-height: 74px; }
.slicer { position: absolute; background: #c39bcb; padding: 2px 10px; display: flex; flex-direction: column; }
.slicer > label, .name { font: 15px/14px Roboto, sans-serif; color: #222; margin-left: -5px; }
.slicer select { appearance: none; height: 28px; margin-top: 9px; padding: 0 5px; border: 2px solid #e8dcea; border-radius: 0; font: 13px "Open Sans", sans-serif; color: #6f6072; background: none; }
.central::after, .unidad::after { content: ""; position: absolute; right: 19px; top: 33px; width: 9px; height: 9px; border: solid #6f6072; border-width: 0 1px 1px 0; transform: rotate(45deg); }
.central { left: 722px; top: 9px; width: 204px; height: 80px; }
.unidad { left: 956px; top: 9px; width: 148px; height: 70px; }
.fecha { left: 1145px; top: 8px; width: 225px; height: 96px; padding: 1px 13px; }
.name { margin-left: -8px; }
.dates { display: grid; grid-template-columns: repeat(2, minmax(0, 1fr)); gap: 6px; margin-top: 10px; }
.dates label { height: 29px; border: 2px solid #e8dcea; display: flex; align-items: center; padding: 0 4px 2px 7px; }
.dates input { flex: 1; min-width: 0; border: 0; padding: 0; background: none; font: 11px "Open Sans", sans-serif; color: #323130; }
.range { display: grid; margin: 7px 7px 0 12px; }
.range input { grid-area: 1 / 1; appearance: none; width: 100%; height: 25px; margin: 0; background: linear-gradient(#e1dfdd, #e1dfdd) center / 100% 4px no-repeat; }
.range input + input { background: none; }
.range input::-webkit-slider-thumb { appearance: none; width: 26px; height: 26px; border: 2px solid #666; border-radius: 50%; background: #fff; }
.measure { position: absolute; left: 743px; top: 140px; width: 496px; height: 45px; background: #ffff55; padding-left: 3px; font: 50px/51px Roboto, sans-serif; color: #222200; white-space: nowrap; }
.note { position: absolute; width: 361px; height: 32px; border: 3px solid #5ea226; background: #fff; box-shadow: 1px 3px 4px rgba(0,0,0,.4); padding-left: 11px; font: 16px/25px "Liberation Sans", Arial, sans-serif; color: #5ea226; }
.n1 { left: 185px; top: 122px; }
.n2 { left: 750px; top: 107px; }
.n3 { left: 754px; top: 194px; }
.events { position: absolute; left: 729px; top: 235px; width: 458px; border-collapse: collapse; border-bottom: 1px solid #4fa3e3; }
.events th { position: relative; height: 25px; padding: 0 0 7px 5px; font-size: 12px; font-weight: 400; text-align: left; white-space: nowrap; color: #222; }
.asc::after { content: ""; position: absolute; left: 5px; bottom: 3px; border: solid transparent; border-width: 0 4px 4px; border-bottom-color: #111; }

.visual { position: absolute; left: 110px; top: 157px; width: 513px; height: 546px; border: 2px solid #b3b0ad; background: #fff; box-shadow: 5px 5px 14px rgba(0,0,0,.5); }
.visual h2 { height: 24px; background: #a0d1ff; font: 700 17px/21px Roboto, sans-serif; color: #222; text-align: center; padding-left: 8px; white-space: nowrap; }
.tools { position: absolute; right: 0; top: 0; display: flex; gap: 4px; }
.tools button { width: 24px; height: 23px; background: #fff; padding: 4px; }
.grid { table-layout: fixed; width: 373px; height: 442px; margin-left: 6px; border-collapse: collapse; font-size: 12px; color: #605e5c; }
.c1 { width: 72px; } .c2 { width: 42px; } .c3 { width: 120px; }
.grid th { height: 78px; padding: 1px 6px 0; vertical-align: top; text-align: left; line-height: 17px; font-weight: 700; color: #222; background: #e6e6e6; border-bottom: 1px solid #6fb3ec; }
.grid th:nth-child(2) { padding: 1px 6px 0 0; text-align: right; }
.grid th:nth-child(3) { padding-right: 30px; }
.grid th:nth-child(4) { text-align: right; padding-left: 0; }
.grid td { height: 20px; padding: 0 6px; line-height: 16px; text-align: right; }
.grid td:first-child { text-align: left; padding: 0 0 0 5px; }
.grid tbody tr:nth-child(even) { background: #f1f1f1; box-shadow: inset 0 1px #e6e6e6, inset 0 -1px #e6e6e6; }
.grid tbody .sel { background: #ebebeb; color: #111; }
.grid tbody .sel td:first-child { background: linear-gradient(#000, #000) 2px 0 / 2px 100% no-repeat; }
.grid tfoot td { border-top: 1px solid #6fb3ec; font-weight: 700; }
.marker { position: absolute; left: 4px; top: 142px; width: 373px; height: 24px; background: #f8f840; mix-blend-mode: multiply; }
.h { position: absolute; width: 8px; height: 8px; border: 0 solid #979593; }
.tl { left: -3px; top: -3px; border-width: 3px 0 0 3px; }
.tr { right: -3px; top: -3px; border-width: 2px 2px 0 0; }
.bl { left: -3px; bottom: -3px; border-width: 0 0 3px 3px; }
.br { right: -3px; bottom: -3px; border-width: 0 3px 3px 0; }
.tm, .bm { left: 249px; width: 12px; height: 3px; background: #979593; }
.tm { top: -3px; } .bm { bottom: -1px; }
.lm, .rm { top: 266px; width: 3px; height: 12px; background: #979593; }
.lm { left: -3px; } .rm { right: -3px; }

.filtros { width: 33px; flex: none; border-left: 1px solid #a19f9d; background: #fff; padding: 12px 0 0 1px; display: flex; flex-direction: column; align-items: center; gap: 14px; }
.filtros h2 { writing-mode: vertical-rl; font-size: 14px; line-height: 18px; font-weight: 600; color: #111; margin-top: -6px; }

.pagebar { height: 35px; flex: none; display: flex; align-items: stretch; background: #f3f2f1; }
.dev { width: 24px; padding: 5px 2px 0; margin-left: 9px; border-bottom: 3px solid transparent; margin-bottom: 4px; display: flex; }
.dev.on { border-color: #117865; }
.dev.phone { width: 14px; padding: 4px 0 0; margin: 0 20px 4px 25px; }
.arr { margin-right: 17px; }
.arr + .arr { margin-right: 7px; }
.pg { width: 86px; background: #fff; border-left: 1px solid #a19f9d; border-bottom: 4px solid #fff; padding-top: 2px; font-size: 11px; }
.pg.on { border-bottom-color: #117865; font-weight: 600; }
.add { width: 39px; margin: 2px 0 1px; background: #117865; display: grid; place-items: center; }

/* Visualizations pane */
.vis { width: 181px; flex: none; background: #f3f2f1; border-left: 1px solid #e1dfdd; }
.vis header { display: flex; justify-content: space-between; align-items: center; padding: 8px 7px 0 8px; }
.vis h2, .data h2 { font-size: 14px; line-height: 22px; font-weight: 600; color: #252423; }
.vis h3 { font-size: 11px; line-height: 16px; font-weight: 600; padding: 8px 8px 3px; }
.modes { display: flex; justify-content: space-between; padding: 0 8px; }
.modes button { width: 32px; height: 32px; display: grid; place-items: center; }
.modes .on { background: #d2d0ce; }
.notch { margin-top: 3px; }
.gallery { display: grid; grid-template-columns: repeat(6, 28px); grid-auto-rows: 28px; place-items: center; padding: 6px 0 2px 6px; margin: 0 6px 0 0; border-bottom: 1px dashed #d2d0ce; }
.gallery svg { width: 19px; height: 19px; fill: none; }
.pick { width: 24px; height: 24px; display: grid; place-items: center; border: 1px solid #605e5c; background: #e1dfdd; }
.k { fill: none; stroke: #3b3a39; stroke-width: 1.2; }
.w { fill: #fff; stroke: #3b3a39; stroke-width: 1.2; }
.b { fill: #83beec; stroke: #0063b1; stroke-width: 1.2; }
.g { fill: #c8c6c4; stroke: #797775; stroke-width: 1.2; }
.bl { fill: none; stroke: #0063b1; stroke-width: 1.3; }
.num { font: 8px "Open Sans", sans-serif; fill: #1f8ad2; }
.dim { fill: #797775; }
.lang { font-size: 16px; color: #1f7fc0; }
.custom { padding: 10px 12px; border-bottom: 1px solid #d8d6d4; height: 36px; }
.fields { padding: 8px 6px 0 4px; font-size: 11px; }
.fields h4 { font-size: 11px; line-height: 16px; font-weight: 400; padding-left: 8px; }
.well { margin-top: 5px; border: 1px dashed #c8c6c4; background: #fff; padding: 4px 2px 9px; display: grid; gap: 3px; }
.well li { height: 22px; display: flex; align-items: center; gap: 5px; padding: 0 4px; background: #edebe9; border: 1px solid #c8c6c4; border-radius: 2px; color: #252423; }
.well span { flex: 1; min-width: 0; white-space: nowrap; }
.fields .drill { margin: 11px 0 9px; font-weight: 500; }
.sw { display: flex; justify-content: space-between; padding: 0 16px 0 8px; margin-bottom: 11px; color: #252423; }
.sw span { width: 114px; white-space: nowrap; }
.sw + .sw span { white-space: normal; }
.sw input { appearance: none; margin: 0; width: 32px; height: 16px; flex: none; border: 1px solid #797775; border-radius: 8px; background: radial-gradient(circle at 9px 7px, #605e5c 4px, transparent 5px) #fff; }
.drop { height: 26px; border: 1px dashed #c8c6c4; background: #fff; padding-left: 8px; line-height: 24px; white-space: nowrap; color: #252423; }

/* Data pane */
.data { width: 161px; flex: none; background: #f3f2f1; border-left: 1px solid #e1dfdd; overflow: hidden; white-space: nowrap; font-size: 11px; color: #484644; }
.data h2 { padding: 8px 8px 15px; }
.search { height: 27px; margin: 0 -4px 10px 4px; border: 1px solid #605e5c; border-radius: 2px; display: flex; align-items: center; gap: 5px; padding-left: 6px; }
.search input { flex: 1; min-width: 0; border: 0; background: none; font: 12px "Open Sans", sans-serif; }
.search input::placeholder { color: #484644; }
.tree li { height: 24px; display: flex; align-items: center; }
.tree svg { width: 14px; height: 14px; }
.tree svg.r { width: 8px; margin-left: 9px; margin-right: 5px; }
.tree svg.d { width: 14px; height: 8px; margin: 0 2px 0 6px; color: #8a8886; }
.ic { position: relative; width: 19px; }
.tree .big { width: 16px; height: 16px; }
.tree .badge { position: absolute; left: 7px; top: 6px; width: 12px; height: 12px; }
.f label { display: flex; align-items: center; padding-left: 38px; }
.f label svg { margin: 0 6px; }
.tree .x svg.r { margin: 0 7px 0 23px; }
.x label { padding-left: 0; }
.f input { appearance: none; width: 12px; height: 12px; margin: 0 0 2px; border: 1px solid #797775; border-radius: 2px; }
.f input:checked { appearance: auto; accent-color: #117865; }

.status { height: 9px; flex: none; overflow: hidden; background: #f3f2f1; border-top: 1px solid #e1dfdd; display: flex; gap: 13px; justify-content: flex-end; align-items: flex-start; padding-top: 3px; font-size: 11px; }
.thumb { width: 4px; height: 12px; margin: 3px 62px 0 0; background: #605e5c; }
.fit { width: 18px; height: 12px; margin: 3px -4px 0 0; border: 1px solid #605e5c; }
```
